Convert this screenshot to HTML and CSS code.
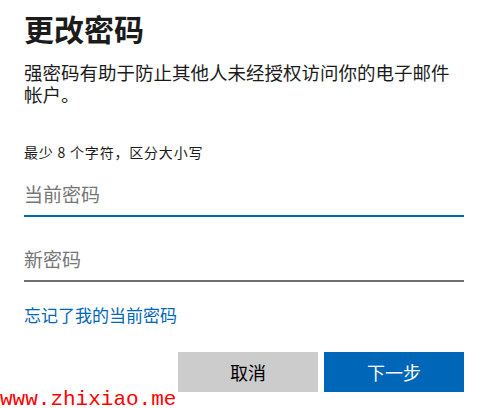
FILE: index.html
```html
<!DOCTYPE html>
<html lang="zh-CN">
<head>
<meta charset="utf-8">
<title>更改密码</title>
<link rel="stylesheet" href="styles.css">
</head>
<body>
<main class="card">
  <h1 class="title">更改密码</h1>
  <p class="desc">强密码有助于防止其他人未经授权访问你的电子邮件帐户。</p>
  <p class="hint">最少 8 个字符，区分大小写</p>
  <input class="field field-active" type="password" placeholder="当前密码">
  <input class="field field-new" type="password" placeholder="新密码">
  <a class="link" href="#">忘记了我的当前密码</a>
  <div class="actions">
    <button class="btn btn-secondary" type="button">取消</button>
    <button class="btn btn-primary" type="button">下一步</button>
  </div>
</main>
<div class="watermark">www.zhixiao.me</div>
</body>
</html>
```

FILE: styles.css
```css
html, body {
  margin: 0;
  padding: 0;
  background: #ffffff;
}

body {
  position: relative;
  width: 501px;
  height: 408px;
  overflow: hidden;
  font-family: "Noto Sans CJK SC", "Noto Sans", sans-serif;
  color: #1b1b1b;
}

.card {
  width: 440px;
  padding: 0 37px 0 24px;
  display: flex;
  flex-direction: column;
}

.title {
  margin: 10px 0 0;
  font-size: 30px;
  line-height: 36px;
  font-weight: 700;
  color: #1b1b1b;
}

.desc {
  margin: 15px 0 0;
  font-size: 18.5px;
  line-height: 22.4px;
  font-weight: 400;
}

.hint {
  margin: 37px 0 0;
  font-size: 14px;
  line-height: 18px;
  letter-spacing: 0.8px;
}

.field {
  display: block;
  box-sizing: content-box;
  width: 440px;
  height: 30px;
  margin: 18px 0 0;
  padding: 0 0 6px;
  border: 0;
  border-bottom: 2px solid #6e6e6e;
  outline: none;
  background: transparent;
  font-family: "Noto Sans CJK SC", sans-serif;
  font-size: 19px;
  color: #1b1b1b;
}

.field::placeholder {
  color: #767676;
  opacity: 1;
}

.field-active {
  border-bottom-color: #0067b8;
}

.field-new {
  margin-top: 27px;
}

.link {
  margin-top: 22px;
  font-size: 17px;
  line-height: 22px;
  color: #0067b8;
  text-decoration: none;
  align-self: flex-start;
}

.actions {
  margin-top: 26px;
  display: flex;
  justify-content: flex-end;
  gap: 6px;
}

.btn {
  width: 140px;
  height: 40px;
  border: 0;
  padding: 0;
  font-family: "Noto Sans CJK SC", sans-serif;
  font-size: 18px;
  line-height: 40px;
  cursor: pointer;
}

.btn-secondary {
  background: #cccccc;
  color: #000000;
}

.btn-primary {
  background: #0067b8;
  color: #ffffff;
}

.watermark {
  position: absolute;
  left: 0;
  top: 392px;
  font-family: "Liberation Mono", monospace;
  font-size: 21px;
  line-height: 16px;
  color: #ff0000;
  white-space: nowrap;
}
```
